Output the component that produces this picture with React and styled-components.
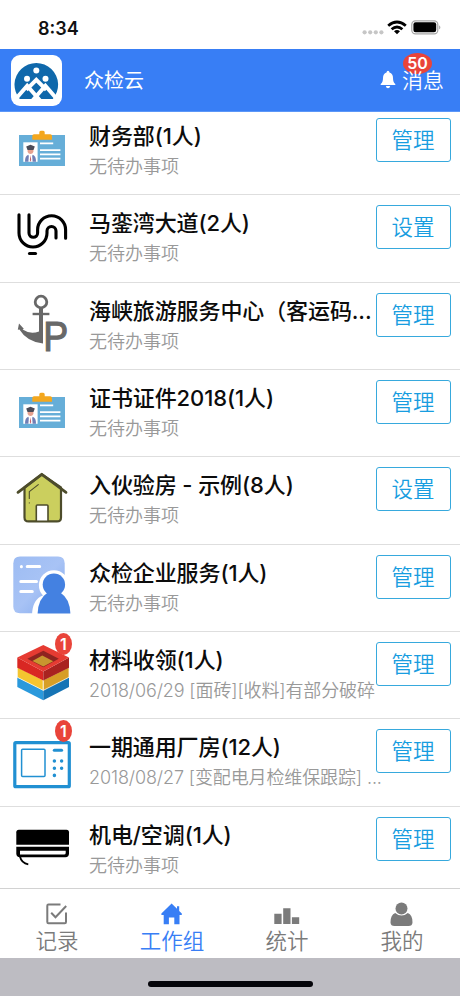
import React, { useState } from 'react'
import styled, { createGlobalStyle } from 'styled-components'

const GlobalStyle = createGlobalStyle`
* {
    box-sizing: border-box;
}

body {
    margin: 0;
    background: #fff;
    font-family: Inter, "Noto Sans CJK SC", sans-serif;
}

svg {
    display: block;
}
`

const Page = styled.div`
display: flex;
flex-direction: column;
width: 460px;
height: 996px;
overflow: hidden;
background: #fff;
`

const StatusBar = styled.div`
display: flex;
flex: none;
justify-content: space-between;
height: 49px;
padding: 0 18px 0 38px;
`

const Time = styled.div`
color: #111;
font-size: 18px;
font-weight: 600;
line-height: 57px;
`

const Header = styled.header`
display: flex;
flex: none;
align-items: center;
height: 63px;
padding: 0 16px 0 11px;
background: #387ef5;
color: #fff;
border-bottom: 1px solid #5c97f8;
`

const HeaderTitle = styled.div`
flex: 1;
margin-left: 22px;
padding-top: 2px;
font-size: 20px;
font-weight: 400;
line-height: 30px;
`

const Messages = styled.div`
position: relative;
display: flex;
align-items: center;
gap: 6px;
padding-top: 2px;
font-size: 21px;
font-weight: 350;
line-height: 30px;

svg {
    margin-top: -3px;
}

span {
    position: relative;
}
`

const Badge = styled.div`
position: absolute;
left: ${(props) => props.$left}px;
top: ${(props) => props.$top}px;
width: ${(props) => props.$width}px;
height: ${(props) => props.$height}px;
border-radius: 50%;
background: #e9443a;
color: #fff;
font-size: 16px;
font-weight: 600;
line-height: ${(props) => props.$height}px;
text-align: center;
`

const List = styled.div`
flex: 1;
min-height: 0;
overflow: hidden;
`

const Inner = styled.div`
margin-top: -4px;
`

const Row = styled.div`
position: relative;
display: grid;
grid-template-columns: 89px 287px 75px;
height: 87.35px;
box-shadow: inset 0 -1px 0 #dedede;
`

const RowText = styled.div`
padding-top: 13px;
white-space: nowrap;
`

const Name = styled.div`
color: #0c0c0c;
font-size: 22px;
font-weight: 500;
line-height: 31px;
letter-spacing: -0.1px;
`

const Note = styled.div`
margin-top: 2px;
color: #999;
font-size: 18px;
font-weight: 350;
line-height: 26px;
letter-spacing: ${(props) => props.$spacing || 0}px;
`

const ActionButton = styled.button`
width: 75px;
height: 44px;
margin-top: 10px;
padding: 0 1px 0 0;
border: 1.5px solid #37a9dd;
border-radius: 3px;
background: #fff;
color: #189de0;
font-family: inherit;
font-size: 21.5px;
font-weight: 350;
line-height: 42px;
`

const TabBar = styled.nav`
display: grid;
flex: none;
grid-template-columns: repeat(4, 115px);
height: 70px;
border-top: 1px solid #d2d2d2;
background: #fff;
`

const Tab = styled.div`
display: flex;
flex-direction: column;
align-items: center;
padding: 11px 1px 0 0;
color: ${(props) => (props.$active ? '#387ef5' : '#7b7b7b')};
font-size: 21.5px;
font-weight: 350;
line-height: 28px;
`

const HomeArea = styled.div`
display: flex;
flex: none;
justify-content: center;
height: 38px;
padding-top: 23px;
background: #bdbcc2;
`

const HomeBar = styled.div`
width: 165px;
height: 6px;
border-radius: 3px;
background: #05050a;
`

const StatusIcons = () => (
    <svg width="82" height="49" viewBox="0 0 82 49">
        <g fill="#c6c6c6">
            <circle cx="4.6" cy="32.3" r="2.1" />
            <circle cx="10.2" cy="32.3" r="2.1" />
            <circle cx="15.8" cy="32.3" r="2.1" />
            <circle cx="21.4" cy="32.3" r="2.1" />
        </g>
        <g fill="none" stroke="#000" strokeWidth="2.8">
            <path d="M28.2 25.8 Q37 18.2 45.8 25.8" />
            <path d="M31.6 29.3 Q37 24.6 42.4 29.3" />
        </g>
        <path d="M34 31.2 Q37 29 40 31.2 L37 34.2 Z" />
        <rect x="51.8" y="20.8" width="26" height="13" rx="3.6" fill="#fff" stroke="#a5a5a5" strokeWidth="1.2" />
        <rect x="53.4" y="22.3" width="22.8" height="10" rx="2.2" />
        <path d="M79.3 25.3 Q81.3 27.4 79.3 29.6 Z" fill="#8f8f8f" />
    </svg>
)

const Logo = () => (
    <svg width="51" height="51" viewBox="0 0 51 51">
        <rect width="51" height="51" rx="9" fill="#fff" />
        <path d="M8.8 44 A21.8 21.8 0 1 1 41.8 44 Z" fill="#0f68ab" />
        <g fill="#fff">
            <circle cx="25.3" cy="15.6" r="3" />
            <circle cx="16" cy="23.7" r="3" />
            <circle cx="34.5" cy="23.7" r="3" />
        </g>
        <g fill="none" stroke="#fff" strokeWidth="4">
            <path d="M2.5 46.5 L16.2 30.8 L29.5 46" />
            <path d="M21.1 46 L34.4 30.8 L48 46.5" />
            <path d="M15.3 34.8 L25.3 24.8 L35.3 34.8" />
        </g>
    </svg>
)

const Bell = () => (
    <svg width="16" height="19" viewBox="0 0 16 19" fill="#fff">
        <path d="M8 0.8 Q9.3 0.8 9.5 2.4 Q13 3.6 13 8 Q13 12.5 15.3 14 V15 H0.7 V14 Q3 12.5 3 8 Q3 3.6 6.5 2.4 Q6.7 0.8 8 0.8 Z" />
        <path d="M5.8 16 H10.2 Q9.8 18.2 8 18.2 Q6.2 18.2 5.8 16 Z" />
    </svg>
)

const CardArt = () => (
    <g>
        <rect x="19" y="27" width="46" height="31" fill="#66aed8" />
        <path d="M32.3 31.8 V28 Q32.3 26.2 34 26.2 H39.3 V24.2 Q39.3 22.7 40.8 22.7 H43.2 Q44.7 22.7 44.7 24.2 V26.2 H50.3 Q52 26.2 52 28 V31.8 Z" fill="#f3a71e" />
        <rect x="23.3" y="34.3" width="14.3" height="19.5" fill="#fff" />
        <path d="M26.2 38.6 L30.5 36.8 L34.8 38.6 L33.5 42 H27.5 Z" fill="#4b4c58" />
        <path d="M27.6 42 H33.4 V44 Q32.6 46 30.5 46 Q28.4 46 27.6 44 Z" fill="#e5a18f" />
        <path d="M25 53.8 Q24.9 48 28.2 46.8 L30.5 50 L32.8 46.8 Q36.1 48 36 53.8 Z" fill="#707fb5" />
        <path d="M28.9 46.8 H32.1 L32.6 53.8 H28.4 Z" fill="#fff" />
        <path d="M30.5 47 L31.2 52 L30.5 53.8 L29.8 52 Z" fill="#ca626b" />
        <path d="M40 35.3 H53.2 M40 42.2 H60.4 M40 46.4 H60.4 M40 50.6 H60.4" stroke="#fff" strokeWidth="1.8" />
    </g>
)

const RoadArt = () => (
    <g fill="none" stroke="#000" strokeWidth="3.1" strokeLinecap="round">
        <path d="M19 19.8 V38 A14 14 0 0 0 47 38 V36 A4.5 4.5 0 0 1 56 36 V43" />
        <path d="M29 19.8 V38 A4.3 4.3 0 0 0 37.6 38 V34.7 A14 14 0 0 1 65.6 34.7 V43.2" />
        <path d="M29.5 58.5 H35.5" />
    </g>
)

const AnchorArt = () => (
    <g fill="#686868">
        <circle cx="41" cy="19" r="5.8" fill="none" stroke="#686868" strokeWidth="2.8" />
        <rect x="39" y="25" width="4" height="33" />
        <rect x="32.6" y="29.8" width="16.8" height="2.4" />
        <path d="M19 40.6 L23.8 45.8 L22.6 46.6 Q30 51.6 39 48.5 V40 H43 V60.6 Q27 59 19.4 46.6 L17.8 46.8 Z" />
        <text x="43.2" y="68" fontFamily="Liberation Sans" fontSize="43" stroke="#686868" strokeWidth="1.2" textLength="25" lengthAdjust="spacingAndGlyphs">P</text>
    </g>
)

const HouseArt = () => (
    <g stroke="#4d4c2b" strokeWidth="2.2" strokeLinecap="round" strokeLinejoin="round">
        <path d="M24.5 30.5 V60.4 Q24.5 64.4 28.5 64.4 H57 Q61 64.4 61 60.4 V30.5 L41.8 17.4 Z" fill="#cbcf5e" />
        <path d="M18 35.3 L41.8 17.3 L66 35.3" fill="none" strokeWidth="2.8" />
        <path d="M36.3 64.2 V48.9 Q36.3 48 37.3 48 H47 Q48 48 48 48.9 V64.2 Z" fill="#fff" strokeWidth="1.6" />
        <path d="M38.3 27.6 L29.3 34.6 V41.5 M29.3 45.8 V46" fill="none" strokeWidth="1.1" />
    </g>
)

const ServiceArt = () => (
    <g>
        <defs>
            <linearGradient id="sheet" x1="0" y1="0" x2="1" y2="1">
                <stop offset="0" stopColor="#9dbcf3" />
                <stop offset="0.5" stopColor="#a8c3f5" />
                <stop offset="1" stopColor="#7fa6ec" />
            </linearGradient>
        </defs>
        <path d="M20 11.6 H58 Q64.7 11.6 64.7 18.5 V40 L45 68.3 H20 Q13.3 68.3 13.3 61.5 V18.5 Q13.3 11.6 20 11.6 Z" fill="url(#sheet)" />
        <g stroke="#fff" strokeWidth="3" strokeLinecap="round">
            <path d="M21.4 21.6 V21.7 M27.2 21.6 H39.7 M20.8 36.6 H36.5 M20.8 46.6 H32.3" />
        </g>
        <path d="M32 70 Q32.5 54 43 50.5 A15 15 0 1 1 64.8 50.5 L72 70 Z" fill="#fff" />
        <circle cx="53.9" cy="39.6" r="11.2" fill="#4481e1" />
        <path d="M37.6 68.5 Q38.3 53.5 47.2 48 H60.8 Q69.7 53.5 70.4 68.5 Z" fill="#4481e1" />
    </g>
)

const StackArt = () => (
    <g>
        <path d="M17.3 45.3 L43.3 58 V68.2 L17.3 55 Z" fill="#2a99dc" />
        <path d="M69 45.3 L43.3 58 V68.2 L69 55 Z" fill="#1674b5" />
        <path d="M17.3 35 L43.3 48 V58.4 L17.3 45.3 Z" fill="#f4c530" stroke="#fff" strokeWidth="0.7" />
        <path d="M69 35 L43.3 48 V58.4 L69 45.3 Z" fill="#d79e26" stroke="#fff" strokeWidth="0.7" />
        <path d="M17.3 25.5 L43.3 39.5 V48.6 L17.3 35.8 Z" fill="#d92723" />
        <path d="M69 25.5 L43.3 39.5 V48.6 L69 35.8 Z" fill="#a92320" />
        <path d="M43.3 12.9 L69 25.5 L43.3 39.5 L17.3 25.5 Z" fill="#e63b32" />
        <path d="M43.3 18.7 L58.8 26.7 L43.3 35.3 L27.3 26.7 Z" fill="#8f2420" />
        <path d="M42.3 23.6 L53.2 29.2 L43.3 34.6 L32.4 29 Z" fill="#c8962f" />
    </g>
)

const PanelArt = () => (
    <g fill="none" stroke="#2190d2">
        <rect x="14.8" y="23.7" width="54.5" height="44" rx="1" strokeWidth="3.2" />
        <rect x="21.6" y="30.2" width="23.4" height="27.2" rx="1" strokeWidth="1.5" />
        <path d="M54.3 31.3 H61.6" strokeWidth="3" strokeLinecap="round" />
        <path d="M54.4 41.9 V42 M61.6 41.9 V42 M54.4 49.2 V49.3 M61.6 49.2 V49.3 M54.4 56.3 V56.4" strokeWidth="3.5" strokeLinecap="round" />
    </g>
)

const AirArt = () => (
    <g>
        <path d="M16.3 37.8 V25.3 Q16.3 22.8 18.8 22.8 H66.5 Q69 22.8 69 25.3 V37.8 Z" />
        <path d="M16.3 39.8 H69 V46.6 Q69 50.2 65.4 50.2 H20 Q16.3 50.2 16.3 46.6 Z" />
        <path d="M20 43.8 H65.7 V46 Q65.7 47.6 64 47.6 H20 Z" fill="#fff" />
        <path d="M19.8 49 Q21.5 56.3 28.3 57.4" fill="none" stroke="#000" strokeWidth="1.8" />
    </g>
)

const CheckIcon = () => (
    <svg width="30" height="27" viewBox="0 0 30 27" fill="none" stroke="currentColor" strokeWidth="2">
        <path d="M18.5 4.5 H6.5 Q5.3 4.5 5.3 5.7 V22 Q5.3 23.2 6.5 23.2 H22.8 Q24 23.2 24 22 V12.5" />
        <path d="M9.2 12.7 L13.5 17.2 L24.2 6" />
    </svg>
)

const HomeIcon = () => (
    <svg width="30" height="27" viewBox="0 0 30 27" fill="currentColor">
        <path d="M14.6 3.5 L20 8.7 V6.2 H22.2 V10.9 L24.8 13.5 V15 H22.5 V24.2 H17.3 V17.6 H11.9 V24.2 H6.7 V15 H4.4 V13.5 Z" />
    </svg>
)

const StatsIcon = () => (
    <svg width="30" height="27" viewBox="0 0 30 27" fill="currentColor">
        <path d="M2.3 13.7 H9.6 V24 H2.3 Z M11.2 8.3 H18.5 V24 H11.2 Z M19.9 17.3 H27.2 V24 H19.9 Z" />
    </svg>
)

const MeIcon = () => (
    <svg width="30" height="27" viewBox="0 0 30 27" fill="currentColor">
        <circle cx="14.5" cy="8.5" r="6" />
        <path d="M8.2 13 Q14.5 18 20.8 13 Q25.5 14.5 25.5 22.5 Q25.3 26 21.5 26 H7.5 Q3.7 26 3.5 22.5 Q3.5 14.5 8.2 13 Z" />
    </svg>
)

const groups = [
    { name: '财务部(1人)', note: '无待办事项', action: '管理', Art: CardArt },
    { name: '马銮湾大道(2人)', note: '无待办事项', action: '设置', Art: RoadArt },
    { name: '海峡旅游服务中心（客运码...', note: '无待办事项', action: '管理', Art: AnchorArt },
    { name: '证书证件2018(1人)', note: '无待办事项', action: '管理', Art: CardArt },
    { name: '入伙验房 - 示例(8人)', note: '无待办事项', action: '设置', Art: HouseArt },
    { name: '众检企业服务(1人)', note: '无待办事项', action: '管理', Art: ServiceArt },
    { name: '材料收领(1人)', note: '2018/06/29 [面砖][收料]有部分破碎', action: '管理', Art: StackArt, count: 1 },
    { name: '一期通用厂房(12人)', note: '2018/08/27 [变配电月检维保跟踪] ...', action: '管理', Art: PanelArt, count: 1 },
    { name: '机电/空调(1人)', note: '无待办事项', action: '管理', Art: AirArt },
]

const tabs = [
    { label: '记录', Icon: CheckIcon },
    { label: '工作组', Icon: HomeIcon },
    { label: '统计', Icon: StatsIcon },
    { label: '我的', Icon: MeIcon },
]

const GroupRow = (props) => {
    const { name, note, action, Art, count } = props.group;

    return (
        <Row>
            <svg width="89" height="87" viewBox="0 0 89 87">
                <Art />
            </svg>
            <RowText>
                <Name>{name}</Name>
                <Note $spacing={count ? -0.12 : 0}>{note}</Note>
            </RowText>
            <ActionButton>{action}</ActionButton>
            {
                count ? <Badge $left={55} $top={1} $width={17} $height={22}>{count}</Badge> : null
            }
        </Row>
    )
}

const App = () => {
    const [active, setActive] = useState(1);

    return (
        <Page>
            <GlobalStyle />
            <StatusBar>
                <Time>8:34</Time>
                <StatusIcons />
            </StatusBar>
            <Header>
                <Logo />
                <HeaderTitle>众检云</HeaderTitle>
                <Messages>
                    <Badge $left={23} $top={-11} $width={29} $height={21}>50</Badge>
                    <Bell />
                    <span>消息</span>
                </Messages>
            </Header>
            <List>
                <Inner>
                    {groups.map((group) => <GroupRow key={group.name} group={group} />)}
                </Inner>
            </List>
            <TabBar>
                {tabs.map(({ label, Icon }, index) => (
                    <Tab key={label} $active={index === active} onClick={() => setActive(index)}>
                        <Icon />
                        {label}
                    </Tab>
                ))}
            </TabBar>
            <HomeArea>
                <HomeBar />
            </HomeArea>
        </Page>
    )
}

export default App
